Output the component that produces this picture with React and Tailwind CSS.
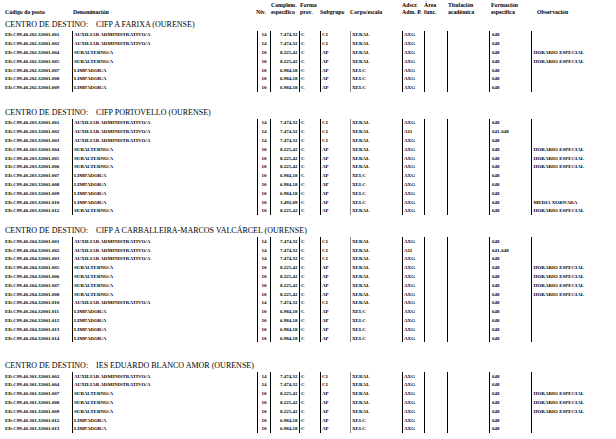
import React from "react";

const AUX = ["AUXILIAR ADMINISTRATIVO/A", "14", "7.474,32", "C", "C1", "XERAL", "AXG", "648", ""];
const AUX11 = ["AUXILIAR ADMINISTRATIVO/A", "14", "7.474,32", "C", "C1", "XERAL", "A11", "641-648", ""];
const SUB = ["SUBALTERNO/A", "10", "8.225,42", "C", "AP", "XERAL", "AXG", "648", "HORARIO ESPECIAL"];
const LIMP = ["LIMPADOR/A", "10", "6.984,18", "C", "AP", "XELC", "AXG", "648", ""];
const MEDIA = ["LIMPADOR/A", "10", "3.492,09", "C", "AP", "XELC", "AXG", "648", "MEDIA XORNADA"];

const sections = [
  {
    name: "CIFP A FARIXA (OURENSE)",
    prefix: "ED.C99.40.202.32001.",
    gap: "",
    rows: [
      ["001", AUX],
      ["002", AUX],
      ["004", SUB],
      ["005", SUB],
      ["007", LIMP],
      ["008", LIMP],
      ["009", LIMP],
    ],
  },
  {
    name: "CIFP PORTOVELLO (OURENSE)",
    prefix: "ED.C99.40.203.32001.",
    gap: "mt-[14.8px]",
    rows: [
      ["001", AUX],
      ["002", AUX11],
      ["003", AUX],
      ["004", SUB],
      ["005", SUB],
      ["006", SUB],
      ["007", LIMP],
      ["008", LIMP],
      ["009", LIMP],
      ["010", MEDIA],
      ["012", SUB],
    ],
  },
  {
    name: "CIFP A CARBALLEIRA-MARCOS VALCÁRCEL (OURENSE)",
    prefix: "ED.C99.40.204.32001.",
    gap: "mt-[10px]",
    rows: [
      ["001", AUX],
      ["002", AUX11],
      ["003", AUX],
      ["005", SUB],
      ["006", SUB],
      ["007", SUB],
      ["008", SUB],
      ["010", AUX],
      ["011", LIMP],
      ["012", LIMP],
      ["013", LIMP],
      ["014", LIMP],
    ],
  },
  {
    name: "IES EDUARDO BLANCO AMOR (OURENSE)",
    prefix: "ED.C99.40.301.32001.",
    gap: "mt-[17.6px]",
    rows: [
      ["002", AUX],
      ["004", AUX],
      ["007", SUB],
      ["008", SUB],
      ["009", SUB],
      ["012", LIMP],
      ["013", LIMP],
    ],
  },
];

function Row({ code, d }) {
  return (
    <div className="flex h-[8.8px] text-[5px] font-bold leading-none whitespace-nowrap">
      <div className="w-[72px] flex items-center pl-[5px]">{code}</div>
      <div className="w-[185px] flex items-center border-l border-black pl-[1px]">{d[0]}</div>
      <div className="w-[13px] flex items-center justify-center border-l border-black">{d[1]}</div>
      <div className="w-[29px] flex items-center justify-end pr-[1.5px] border-l border-black">{d[2]}</div>
      <div className="w-[21px] flex items-center pl-[1px] border-l border-black">{d[3]}</div>
      <div className="w-[30px] flex items-center pl-[1px] border-l border-black">{d[4]}</div>
      <div className="w-[52px] flex items-center pl-[1px] border-l border-[#8a8a8a]">{d[5]}</div>
      <div className="w-[22px] flex items-center pl-[1px] border-l border-black">{d[6]}</div>
      <div className="w-[23px] border-l border-black"></div>
      <div className="w-[42px] border-l border-black"></div>
      <div className="w-[42px] flex items-center pl-[2px] border-l border-black">{d[7]}</div>
      <div className="flex-1 flex items-center pl-[1.5px] border-l-[1.5px] border-black">{d[8]}</div>
    </div>
  );
}

function Section({ s }) {
  return (
    <div className={s.gap}>
      <div className="h-[11.6px] flex items-center pl-[5px] text-[8px] leading-none whitespace-nowrap">
        <span>CENTRO DE DESTINO:</span>
        <span className="ml-[8px]">{s.name}</span>
      </div>
      {s.rows.map(([n, d], i) => (
        <Row key={i} code={s.prefix + n} d={d} />
      ))}
    </div>
  );
}

export default function App() {
  return (
    <div className="w-[616px] h-[439px] overflow-hidden bg-white text-black font-['Liberation_Serif',serif]">
      <div className="h-[19px] flex items-end pb-[3px] text-[5.8px] font-bold leading-[7px] whitespace-nowrap">
        <div className="w-[72px] pl-[5px]">Código do posto</div>
        <div className="w-[184px] pl-[1px]">Denominación</div>
        <div className="w-[15px]">Niv.</div>
        <div className="w-[29px] flex flex-col">
          <span>Complem.</span>
          <span>específico</span>
        </div>
        <div className="w-[20px] flex flex-col">
          <span>Forma</span>
          <span>prov.</span>
        </div>
        <div className="w-[30px]">Subgrupo</div>
        <div className="w-[52px]">Corpo/escala</div>
        <div className="w-[22px] flex flex-col">
          <span>Adscr.</span>
          <span>Adm. P.</span>
        </div>
        <div className="w-[24px] flex flex-col">
          <span>Área</span>
          <span>func.</span>
        </div>
        <div className="w-[43px] flex flex-col">
          <span>Titulación</span>
          <span>académica</span>
        </div>
        <div className="w-[46px] flex flex-col">
          <span>Formación</span>
          <span>específica</span>
        </div>
        <div>Observación</div>
      </div>
      {sections.map((s, i) => (
        <Section key={i} s={s} />
      ))}
    </div>
  );
}
